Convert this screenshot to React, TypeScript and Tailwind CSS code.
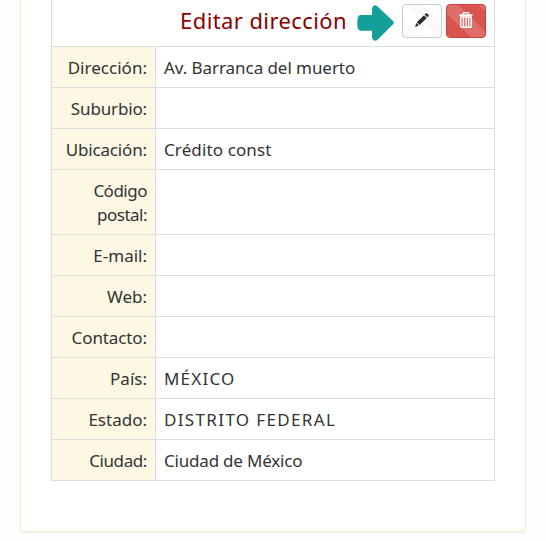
type Row = { label: string; value?: string; labelClass?: string; valueClass?: string };

const rows: Row[] = [
  { label: "Dirección:", value: "Av. Barranca del muerto", labelClass: "tracking-[0.02px]", valueClass: "tracking-[-0.06px]" },
  { label: "Suburbio:", labelClass: "tracking-[-0.15px]" },
  { label: "Ubicación:", value: "Crédito const", labelClass: "tracking-[-0.15px]", valueClass: "tracking-[0.12px]" },
  { label: "Código postal:", labelClass: "tracking-[-0.5px]" },
  { label: "E-mail:" },
  { label: "Web:" },
  { label: "Contacto:", labelClass: "tracking-[-0.1px]" },
  { label: "País:", value: "MÉXICO", valueClass: "tracking-[1.2px]" },
  { label: "Estado:", value: "DISTRITO FEDERAL", valueClass: "tracking-[1.35px]" },
  { label: "Ciudad:", value: "Ciudad de México", labelClass: "tracking-[-0.4px]", valueClass: "tracking-[-0.2px]" },
];

function ArrowRight() {
  return (
    <svg viewBox="0 0 38 38" className="h-[38px] w-[38px] shrink-0" fill="#14a098">
      <path d="M3.5 11H15V5Q15 2.2 17.5 1.3Q19.2 1 20.8 2.8L36.3 17.3Q37.4 18.8 36.3 20L21 35.2Q19.2 37.3 17.2 36.6Q15 35.5 15 33V26.8H4.5Q1 26.8 .6 23Q-.2 18.5 .7 14Q1.2 11.2 3.5 11Z" />
    </svg>
  );
}

function Pencil() {
  return (
    <svg viewBox="0 0 14 14" className="h-[14px] w-[14px]" fill="#2b2b33">
      <path d="M10.7.5Q11.5-.2 12.3.5L13.5 1.7Q14.2 2.5 13.5 3.2L12.4 4.3L9.6 1.6ZM9 2.2L11.8 5L4.6 12.1L1.8 9.3ZM1.3 9.9L4 12.6L0 14Z" />
    </svg>
  );
}

function Trash() {
  return (
    <svg viewBox="0 0 14 16" className="h-4 w-[14px]" fill="none" stroke="#fff">
      <path d="M4.5 2.5V1.2Q4.5.7 5 .7H9Q9.5.7 9.5 1.2V2.5" strokeWidth="1.3" />
      <path d="M.5 3.2H13.5" strokeWidth="1.8" />
      <path d="M1.8 5H12.2V14.6Q12.2 15.2 11.6 15.2H2.4Q1.8 15.2 1.8 14.6Z" strokeWidth="1.4" />
      <path d="M4.4 5V15M7 5V15M9.6 5V15" strokeWidth="1.3" />
    </svg>
  );
}

export default function App() {
  return (
    <div className="h-[541px] overflow-hidden bg-[#fdfdfd] pr-5 pl-5 font-['Noto_Sans',sans-serif] text-[17px] leading-6 text-[#333]">
      <div className="h-[532px] w-[506px] rounded-b border border-t-0 border-[#faebcc] bg-white pl-[30px] shadow-[0_1px_1px_rgba(0,0,0,0.05)]">
        <div className="w-[444px] border-x border-[#ddd]">
          <div className="flex h-[46px] items-start justify-end pr-2">
            <h1 className="mt-[5px] mr-[10px] text-[22px] leading-[30px] tracking-[0.4px] text-[#8b0000]">
              Editar dirección
            </h1>
            <div className="mt-[4px] mr-[7px] flex">
              <ArrowRight />
            </div>
            <button
              aria-label="Editar"
              className="mt-1 mr-1 flex h-[34px] w-10 items-center justify-center rounded border border-[#ccc] bg-[linear-gradient(45deg,#fafafa_25%,#fff_25%,#fff_50%,#fafafa_50%,#fafafa_75%,#fff_75%)] pb-[2px]"
            >
              <Pencil />
            </button>
            <button
              aria-label="Eliminar"
              className="mt-1 flex h-[34px] w-10 items-center justify-center rounded border border-[#d43f3a] bg-[#d9534f] bg-[linear-gradient(45deg,rgba(255,255,255,0.15)_25%,transparent_25%,transparent_50%,rgba(255,255,255,0.15)_50%,rgba(255,255,255,0.15)_75%,transparent_75%)] bg-[length:40px_40px] bg-[position:0_8px] pb-[3px]"
            >
              <Trash />
            </button>
          </div>
          <dl className="border-b border-[#ddd]">
            {rows.map((row) => (
              <div key={row.label} className="flex border-t border-[#ddd]">
                <dt className={`w-[104px] border-r border-[#ddd] bg-[#fcf8e3] px-2 pt-[9px] pb-[7px] text-right ${row.labelClass ?? ""}`}>
                  {row.label}
                </dt>
                <dd className={`flex-1 px-2 pt-[9px] pb-[7px] ${row.valueClass ?? ""}`}>{row.value}</dd>
              </div>
            ))}
          </dl>
        </div>
      </div>
    </div>
  );
}
